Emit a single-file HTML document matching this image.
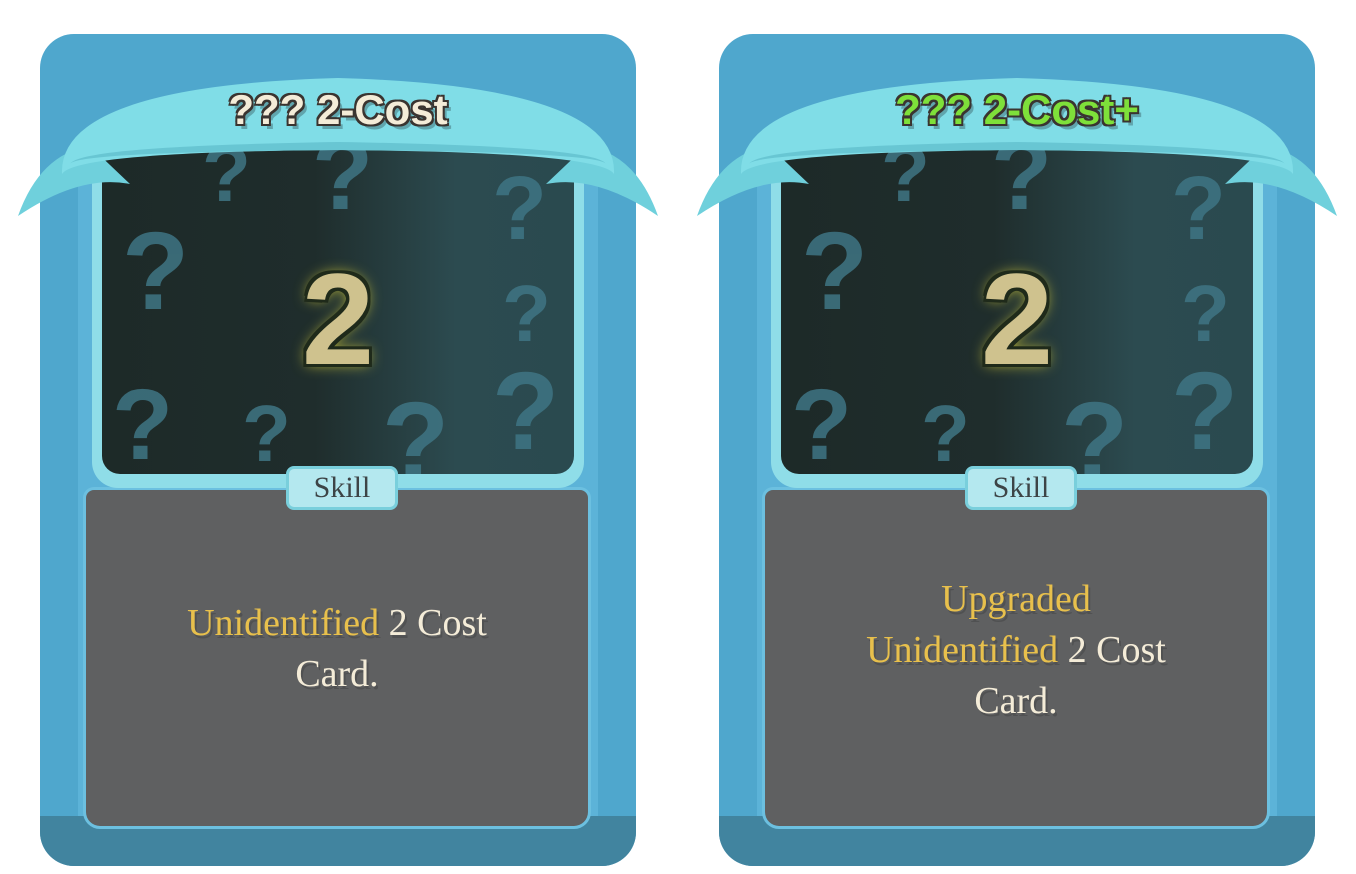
<!DOCTYPE html>
<html><head><style>
body{margin:0;width:1356px;height:874px;background:#fff;position:relative;overflow:hidden;font-family:"Liberation Serif",serif}
.card{position:absolute;top:34px;width:596px;height:832px;border-radius:34px;background:#4fa7cd;overflow:visible}
.card .bot{position:absolute;left:0;right:0;bottom:0;height:50px;border-radius:0 0 34px 34px;background:#41849f}
.card .inner{position:absolute;left:38px;top:100px;width:520px;height:710px;border-radius:16px;background:#5cb3d8}
.panel{position:absolute;left:46px;top:456px;width:502px;height:336px;background:#5f6061;border-radius:8px 8px 14px 14px;box-shadow:0 0 0 3px #6cc0e0}
.frame{position:absolute;left:52px;top:104px;width:492px;height:350px;border-radius:26px;background:#8fdde8}
.art{position:absolute;left:62px;top:114px;width:472px;height:326px;border-radius:18px;background:linear-gradient(90deg,#1d2a28 0%,#1f2d2c 45%,#2c4b50 75%,#2a4a4f 100%);overflow:hidden}
.q{position:absolute;color:#3f7584;font-family:"Liberation Sans",sans-serif;font-weight:bold;opacity:.85}
svg.b{position:absolute;left:0;top:0;overflow:visible}
.title{position:absolute;left:0;right:0;top:52px;text-align:center;font:bold 42px "Liberation Sans",sans-serif;color:#f4ecd8;text-shadow:-2px -2px 0 #3a3430,2px -2px 0 #3a3430,-2px 2px 0 #3a3430,2px 2px 0 #3a3430,4px 5px 0 rgba(0,0,0,.25)}
.cost{position:absolute;left:0;right:0;top:210px;text-align:center;font:bold 130px "Liberation Sans",sans-serif;color:#cfc28e;text-shadow:-3px -3px 0 #1f2a1a,3px -3px 0 #1f2a1a,-3px 3px 0 #1f2a1a,3px 3px 0 #1f2a1a,0 0 14px #c9c23a}
.skill{position:absolute;left:246px;top:432px;width:112px;height:44px;background:#b4e8ef;border:3px solid #79cfdc;border-radius:8px;box-sizing:border-box;text-align:center;font:30px "Liberation Serif",serif;color:#3d4446;line-height:38px}
.desc{position:absolute;left:46px;width:502px;text-align:center;font:38px/51px "Liberation Serif",serif;color:#f4ecd8;text-shadow:2px 3px 0 rgba(0,0,0,.15)}
.y{color:#e8c04c}
</style></head><body>
<div class="card" style="left:40px">
<div class="inner"></div><div class="bot"></div>
<div class="panel"></div>
<div class="frame"></div>
<div class="art">
<span class="q" style="left:20px;top:60px;font-size:110px">?</span>
<span class="q" style="left:10px;top:220px;font-size:100px">?</span>
<span class="q" style="left:140px;top:240px;font-size:80px">?</span>
<span class="q" style="left:280px;top:230px;font-size:110px">?</span>
<span class="q" style="left:400px;top:120px;font-size:80px">?</span>
<span class="q" style="left:390px;top:200px;font-size:110px">?</span>
<span class="q" style="left:390px;top:10px;font-size:90px">?</span>
<span class="q" style="left:210px;top:-30px;font-size:100px">?</span>
<span class="q" style="left:100px;top:-20px;font-size:80px">?</span>
</div>
<div class="cost">2</div>
<svg class="b" width="596" height="200"><path d="M-22 182 Q0 120 50 112 L90 150 Q40 140 -22 182Z M618 182 Q596 120 546 112 L506 150 Q556 140 618 182Z" fill="#6fd0dc"/><path d="M22 140 Q18 52 298 44 Q578 52 574 140 Q560 118 298 116 Q36 118 22 140Z" fill="#80dde7"/><path d="M30 130 Q40 112 298 108 Q556 112 566 130 Q560 118 298 116 Q36 118 30 130Z" fill="#68c6d3"/></svg>
<div class="title">??? 2-Cost</div>
<div class="skill">Skill</div>
<div class="desc" style="top:564px"><span class="y">Unidentified</span> 2 Cost<br>Card.</div>
</div>
<div class="card" style="left:719px">
<div class="inner"></div><div class="bot"></div>
<div class="panel"></div>
<div class="frame"></div>
<div class="art">
<span class="q" style="left:20px;top:60px;font-size:110px">?</span>
<span class="q" style="left:10px;top:220px;font-size:100px">?</span>
<span class="q" style="left:140px;top:240px;font-size:80px">?</span>
<span class="q" style="left:280px;top:230px;font-size:110px">?</span>
<span class="q" style="left:400px;top:120px;font-size:80px">?</span>
<span class="q" style="left:390px;top:200px;font-size:110px">?</span>
<span class="q" style="left:390px;top:10px;font-size:90px">?</span>
<span class="q" style="left:210px;top:-30px;font-size:100px">?</span>
<span class="q" style="left:100px;top:-20px;font-size:80px">?</span>
</div>
<div class="cost">2</div>
<svg class="b" width="596" height="200"><path d="M-22 182 Q0 120 50 112 L90 150 Q40 140 -22 182Z M618 182 Q596 120 546 112 L506 150 Q556 140 618 182Z" fill="#6fd0dc"/><path d="M22 140 Q18 52 298 44 Q578 52 574 140 Q560 118 298 116 Q36 118 22 140Z" fill="#80dde7"/><path d="M30 130 Q40 112 298 108 Q556 112 566 130 Q560 118 298 116 Q36 118 30 130Z" fill="#68c6d3"/></svg>
<div class="title" style="color:#7ee03a">??? 2-Cost+</div>
<div class="skill">Skill</div>
<div class="desc" style="top:540px"><span class="y">Upgraded<br>Unidentified</span> 2 Cost<br>Card.</div>
</div>
</body></html>
